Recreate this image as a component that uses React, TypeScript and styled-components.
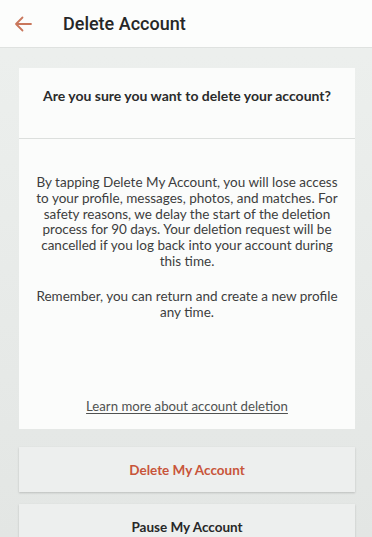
import styled, { createGlobalStyle } from 'styled-components';

const GlobalStyle = createGlobalStyle`
	html, body {
		margin: 0;
		padding: 0;
		background: #eaedeb;
	}
	* {
		box-sizing: border-box;
	}
`;

const Page = styled.div`
	width: 372px;
	height: 537px;
	overflow: hidden;

	display: flex;
	flex-direction: column;

	background: linear-gradient(#edf0ee, #e3e6e4);
	font-family: Lato, 'Liberation Sans', sans-serif;
`;

const Header = styled.header`
	height: 48px;
	flex-shrink: 0;

	display: flex;
	align-items: center;

	padding: 0 0 0 12px;
	background: #fcfdfc;
	border-bottom: 1px solid #dfe2e0;
`;

const BackButton = styled.button`
	width: 22px;
	height: 22px;

	display: flex;
	align-items: center;
	justify-content: center;

	padding: 0;
	border: none;
	background: none;
	margin-right: 29px;
`;

const HeaderTitle = styled.h1`
	margin: 0;

	font-family: Roboto, 'Liberation Sans', sans-serif;
	font-size: 18px;
	font-weight: 500;
	color: #262727;
`;

const Content = styled.main`
	flex-shrink: 0;

	display: flex;
	flex-direction: column;
	gap: 18px;

	padding: 20px 17px 0 19px;
`;

const Card = styled.section`
	height: 361px;

	display: flex;
	flex-direction: column;

	background: #fbfcfb;
`;

const Question = styled.h2`
	height: 71px;
	flex-shrink: 0;

	margin: 0;
	padding-top: 19px;

	font-size: 14px;
	font-weight: 700;
	text-align: center;
	color: #2a2b2b;

	border-bottom: 1px solid #dcdfdd;
`;

const Body = styled.div`
	flex: 1;

	display: flex;
	flex-direction: column;
	align-items: center;

	padding: 36px 14px 0;
`;

const Paragraph = styled.p`
	margin: 0 0 19px;

	font-size: 13.5px;
	line-height: 15.8px;
	text-align: center;
	color: #3d3e3e;
`;

const LearnMore = styled.a`
	margin-top: auto;
	margin-bottom: 15px;

	font-size: 13.2px;
	color: #505251;
	text-decoration: underline;
	text-underline-offset: 2px;
`;

const ActionButton = styled.button<{ $danger?: boolean }>`
	width: 100%;
	height: 45px;
	flex-shrink: 0;

	border: none;
	background: #edefee;
	box-shadow: 0 1px 2px rgba(0, 0, 0, 0.18);

	font-family: Lato, 'Liberation Sans', sans-serif;
	font-size: 13.5px;
	font-weight: 700;
	color: ${(props) => (props.$danger ? '#c8553a' : '#272828')};
`;

const Buttons = styled.div`
	display: flex;
	flex-direction: column;
	gap: 12px;
`;

const BackArrow = () => (
	<svg width="18" height="16" viewBox="0 0 18 16" fill="none">
		<path d="M17 8H2M8.5 1.5L2 8l6.5 6.5" stroke="#c9775c" strokeWidth="1.8" strokeLinecap="round" strokeLinejoin="round" />
	</svg>
);

const App = () => {
	return (
		<>
			<GlobalStyle />
			<Page>
				<Header>
					<BackButton>
						<BackArrow />
					</BackButton>
					<HeaderTitle>Delete Account</HeaderTitle>
				</Header>

				<Content>
					<Card>
						<Question>Are you sure you want to delete your account?</Question>
						<Body>
							<Paragraph>
								By tapping Delete My Account, you will lose access to your profile, messages, photos, and
								matches. For safety reasons, we delay the start of the deletion process for 90 days. Your
								deletion request will be cancelled if you log back into your account during this time.
							</Paragraph>
							<Paragraph>Remember, you can return and create a new profile any time.</Paragraph>
							<LearnMore href="#">Learn more about account deletion</LearnMore>
						</Body>
					</Card>

					<Buttons>
						<ActionButton $danger>Delete My Account</ActionButton>
						<ActionButton>Pause My Account</ActionButton>
					</Buttons>
				</Content>
			</Page>
		</>
	);
};

export default App;
